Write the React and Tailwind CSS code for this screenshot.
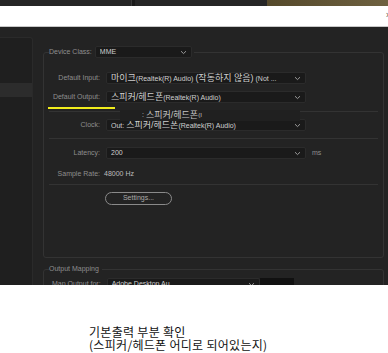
import React from 'react';

const sans = { fontFamily: '"Liberation Sans", "Noto Sans CJK KR", sans-serif' };

function Chevron() {
  return (
    <svg width="7" height="5" viewBox="0 0 7 5" className="shrink-0">
      <path d="M1 1.2 L3.5 3.6 L6 1.2" fill="none" stroke="#9a9a9a" strokeWidth="1" />
    </svg>
  );
}

function Select({ children, className = '' }) {
  return (
    <div className={`h-[12px] bg-[#1a1a1a] border border-[#2b2b2b] rounded-[2px] flex items-center pl-[4px] pr-[4px] ${className}`}>
      <div className="flex-1 truncate text-[7px] leading-[10px] text-[#cfcfcf] whitespace-nowrap">{children}</div>
      <Chevron />
    </div>
  );
}

function Ko({ children }) {
  return <span className="text-[9px]">{children}</span>;
}

function Row({ label, children, className = '' }) {
  return (
    <div className={`flex items-center h-[12px] ${className}`}>
      <div className="w-[51px] text-right text-[7px] text-[#8e8e8e] whitespace-nowrap">{label}</div>
      <div className="ml-[6px] flex items-center">{children}</div>
    </div>
  );
}

export default function App() {
  return (
    <div className="w-[388px] h-[353px] bg-white overflow-hidden" style={sans}>
      {/* top strip */}
      <div className="h-[6px] flex bg-[#262626]">
        <div className="w-[132px] border-r border-[#3a3a3a]" />
        <div className="w-[3px] bg-[#1a1a1a]" />
        <div className="w-[132px]" />
        <div className="flex-1 bg-gradient-to-r from-[#55492b] to-[#6e6140]" />
      </div>
      {/* white title bar */}
      <div className="h-[21px] bg-white border-b border-[#c8c8c8] flex items-center justify-end">
        <span className="text-[9px] text-[#555] mr-[-3px]">×</span>
      </div>

      {/* dark panel */}
      <div className="h-[258px] bg-[#232323] flex pt-[10px] overflow-hidden">
        <div className="w-[33px] shrink-0 bg-[#1f1f1f] border-r border-t border-[#2a2a2a] rounded-tr-[3px] pt-[45px]">
          <div className="h-[14px] bg-[#2c2c2c]" />
        </div>

        <div className="ml-[10px] flex-1 mr-[4px]">
          <fieldset className="relative mt-[9px] border border-[#333] rounded-[3px] px-[5px] h-[212px]">
            <legend className="flex items-center h-[12px] pr-[2px]">
              <span className="text-[7px] text-[#8e8e8e] whitespace-nowrap">Device Class:</span>
              <Select className="ml-[3px] w-[97px]">MME</Select>
            </legend>

            <Row label="Default Input:" className="mt-[14px]">
              <Select className="w-[200px]">
                <Ko>마이크</Ko>(Realtek(R) Audio) <Ko>(작동하지 않음)</Ko> (Not ...
              </Select>
            </Row>
            <Row label="Default Output:" className="mt-[7px]">
              <Select className="w-[200px]">
                <Ko>스피커/헤드폰</Ko>(Realtek(R) Audio)
              </Select>
            </Row>
            <div className="mt-[8px] border-t border-[#333]" />
            <Row label="Clock:" className="mt-[7px]">
              <Select className="w-[200px]">
                Out: <Ko>스피커/헤드폰</Ko>(Realtek(R) Audio)
              </Select>
            </Row>
            <div className="mt-[7px] border-t border-[#333]" />
            <Row label="Latency:" className="mt-[8px]">
              <Select className="w-[200px]">200</Select>
              <span className="ml-[6px] text-[7px] text-[#8e8e8e]">ms</span>
            </Row>
            <Row label="Sample Rate:" className="mt-[9px]">
              <span className="text-[7px] text-[#bdbdbd] ml-[-2px]">48000 Hz</span>
            </Row>
            <div className="mt-[4px] border-t border-[#333]" />
            <div className="mt-[7px] ml-[56px] w-[67px] h-[13px] rounded-full border border-[#8a8a8a] flex items-center justify-center text-[7px] text-[#a8a8a8]">
              Settings...
            </div>

            {/* highlight underline + tooltip */}
            <div className="absolute left-[4px] top-[49px] w-[67px] h-[2px] bg-[#f0ec1c]" />
            <div className="absolute left-[76px] top-[52px] w-[180px] h-[11px] bg-[#202020] flex items-center pl-[22px] text-[#c4c4c4] whitespace-nowrap">
              <span className="text-[7px]">: </span>
              <span className="text-[9px] ml-[2px]">스피커/헤드폰</span>
              <span className="text-[6px]">(I</span>
            </div>
          </fieldset>

          <fieldset className="mt-[5px] border border-[#333] rounded-[3px] px-[5px] h-[40px]">
            <legend className="text-[7px] text-[#8e8e8e] pr-[3px] h-[12px] leading-[12px]">Output Mapping</legend>
            <div className="flex items-center mt-[3px] h-[12px]">
              <span className="ml-[3px] text-[7px] text-[#8e8e8e] whitespace-nowrap">Map Output for:</span>
              <Select className="ml-[6px] w-[153px]">Adobe Desktop Au...</Select>
              <div className="w-[34px] h-[12px] bg-[#111]" />
            </div>
          </fieldset>
        </div>
      </div>

      {/* caption */}
      <div className="pt-[40px] pl-[89px] text-[12px] leading-[13px] tracking-[0.3px] text-[#111]" style={{ fontFamily: '"Noto Sans CJK KR", sans-serif' }}>
        <div>기본출력 부분 확인</div>
        <div>(스피커/헤드폰 어디로 되어있는지)</div>
      </div>
    </div>
  );
}
